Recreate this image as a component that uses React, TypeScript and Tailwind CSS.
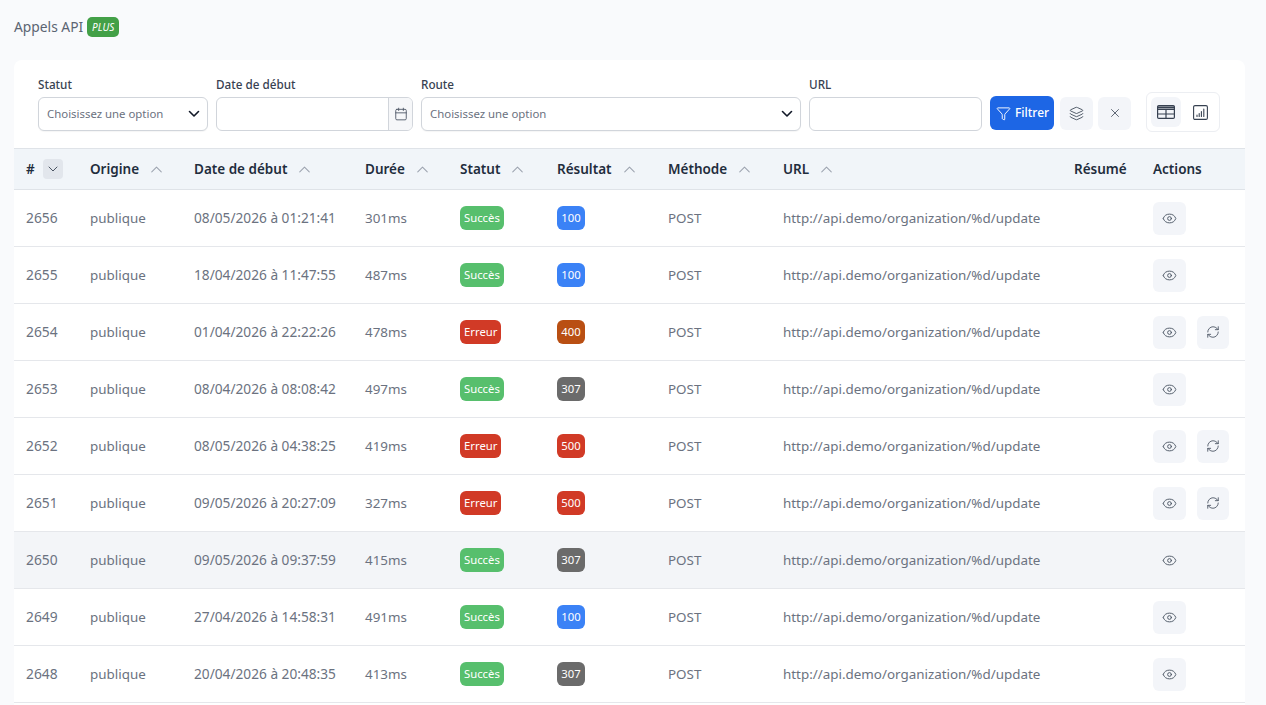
import { Calendar, ChevronDown, ChevronUp, Eye, Funnel, Layers, RefreshCw, X } from "lucide-react";

const rows = [
  { id: 2656, date: "08/05/2026 à 01:21:41", ms: "301ms", ok: true, code: 100 },
  { id: 2655, date: "18/04/2026 à 11:47:55", ms: "487ms", ok: true, code: 100 },
  { id: 2654, date: "01/04/2026 à 22:22:26", ms: "478ms", ok: false, code: 400 },
  { id: 2653, date: "08/04/2026 à 08:08:42", ms: "497ms", ok: true, code: 307 },
  { id: 2652, date: "08/05/2026 à 04:38:25", ms: "419ms", ok: false, code: 500 },
  { id: 2651, date: "09/05/2026 à 20:27:09", ms: "327ms", ok: false, code: 500 },
  { id: 2650, date: "09/05/2026 à 09:37:59", ms: "415ms", ok: true, code: 307, hover: true },
  { id: 2649, date: "27/04/2026 à 14:58:31", ms: "491ms", ok: true, code: 100 },
  { id: 2648, date: "20/04/2026 à 20:48:35", ms: "413ms", ok: true, code: 307 },
];

const codeColors: Record<number, string> = {
  100: "bg-[#3b82f6]",
  307: "bg-[#6b6b6b]",
  400: "bg-[#b94f13]",
  500: "bg-[#d13a26]",
};

function Field({ label, width, children }: { label: string; width: string; children: React.ReactNode }) {
  return (
    <div className={`flex flex-col ${width}`}>
      <label className="mb-[3px] h-[20px] text-[11.7px] leading-[20px] font-medium text-[#374151]">{label}</label>
      {children}
    </div>
  );
}

function SelectBox() {
  return (
    <div className="flex h-[34px] items-center justify-between rounded-md border border-[#d1d5db] bg-white pr-[5px] pl-[8px] shadow-[0_1px_1px_rgba(0,0,0,0.04)]">
      <span className="text-[11.4px] text-[#6b7280]">Choisissez une option</span>
      <svg width="16" height="16" viewBox="0 0 16 16" fill="none" stroke="#111827" strokeWidth="1.6" strokeLinecap="round" strokeLinejoin="round">
        <path d="M3.5 5.5l4.5 4.5 4.5-4.5" />
      </svg>
    </div>
  );
}

function IconBtn({ children, className = "" }: { children: React.ReactNode; className?: string }) {
  return (
    <button className={`flex h-[33px] items-center justify-center rounded-md text-[#4b5563] ${className}`}>
      {children}
    </button>
  );
}

function Th({ label, width, sort = true }: { label: string; width: string; sort?: boolean }) {
  return (
    <th className={`${width} px-0 pb-[2px] text-left font-semibold`}>
      <span className="inline-flex items-center gap-[8px] text-[13.5px] text-[#1f2d3d]">
        {label}
        {sort && <ChevronUp size={19} strokeWidth={1.3} className="text-[#9ca3af]" />}
      </span>
    </th>
  );
}

export default function App() {
  return (
    <div className="h-[705px] overflow-hidden bg-[#f9fafc] px-[14px] font-['Noto_Sans',sans-serif] text-[#6b7280]">
      <div className="flex h-[60px] items-start pt-[17px]">
        <span className="text-[13.8px] leading-[20px] text-[#5b6472]">Appels API</span>
        <span className="ml-[4px] flex h-[20px] w-[32px] items-center justify-center rounded-[5px] bg-[#43a047] text-[10px] text-white italic">
          PLUS
        </span>
      </div>

      <div className="w-[1231px] rounded-t-lg bg-white">
        <div className="flex h-[88px] items-start pt-[14px] pl-[24px]">
          <Field label="Statut" width="w-[170px]">
            <SelectBox />
          </Field>
          <Field label="Date de début" width="w-[197px] ml-[8px]">
            <div className="flex h-[34px] overflow-hidden rounded-md border border-[#d1d5db] bg-white">
              <div className="flex-1" />
              <div className="flex w-[24px] items-center justify-center border-l border-[#d1d5db] bg-[#f6f7f9]">
                <Calendar size={14} strokeWidth={1.5} className="text-[#4b5563]" />
              </div>
            </div>
          </Field>
          <Field label="Route" width="w-[380px] ml-[8px]">
            <SelectBox />
          </Field>
          <Field label="URL" width="w-[173px] ml-[8px]">
            <div className="h-[34px] rounded-md border border-[#d1d5db] bg-white" />
          </Field>
          <div className="mt-[18px] ml-[8px] flex items-center">
            <button className="mt-[2px] flex h-[34px] w-[64px] items-center justify-center gap-[4px] rounded-md bg-[#1d66e5] pl-[1px] text-[12px] font-medium text-white">
              <Funnel size={15} strokeWidth={1.5} />
              Filtrer
            </button>
            <IconBtn className="mt-[2px] ml-[6px] w-[33px] bg-[#f3f5f9]">
              <Layers size={15} strokeWidth={1.5} />
            </IconBtn>
            <IconBtn className="mt-[2px] ml-[5px] w-[33px] bg-[#f3f5f9]">
              <X size={14} strokeWidth={1.5} />
            </IconBtn>
            <div className="ml-[15px] flex h-[40px] w-[74px] items-center justify-center gap-[4px] rounded-md border border-[#eceef2]">
              <span className="flex h-[30px] w-[30px] items-center justify-center rounded-md bg-[#f3f5f9]">
                <svg width="18" height="14" viewBox="0 0 18 14" fill="none" stroke="#374151" strokeWidth="1.2">
                  <rect x="0.6" y="0.6" width="16.8" height="12.8" rx="1.2" />
                  <path d="M0.6 4.5h16.8M0.6 9h16.8M9 4.5v8.9" />
                  <path d="M0.6 2.5h16.8" strokeWidth="2" />
                </svg>
              </span>
              <span className="flex h-[30px] w-[30px] items-center justify-center">
                <svg width="15" height="15" viewBox="0 0 15 15" fill="none" stroke="#374151" strokeWidth="1.1">
                  <rect x="0.6" y="0.6" width="13.8" height="13.8" rx="1.4" />
                  <path d="M4 11.5v-1.5M6.2 11.5v-3M8.4 11.5v-5M10.8 11.5v-7.5" strokeLinecap="round" />
                </svg>
              </span>
            </div>
          </div>
        </div>

        <table className="w-full table-fixed border-collapse">
          <thead>
            <tr className="h-[41px] border-y border-[#dfe3e8] bg-[#f1f5f9]">
              <th className="w-[76px] pb-[2px] pl-[12px] text-left font-semibold">
                <span className="inline-flex items-center gap-[8px] text-[13.5px] text-[#1f2d3d]">
                  #
                  <span className="flex h-[20px] w-[20px] items-center justify-center rounded bg-[#e2e6ec]">
                    <ChevronDown size={16} strokeWidth={1.5} className="text-[#4b5563]" />
                  </span>
                </span>
              </th>
              <Th label="Origine" width="w-[104px]" />
              <Th label="Date de début" width="w-[171px]" />
              <Th label="Durée" width="w-[95px]" />
              <Th label="Statut" width="w-[97px]" />
              <Th label="Résultat" width="w-[111px]" />
              <Th label="Méthode" width="w-[115px]" />
              <Th label="URL" width="w-[291px]" />
              <Th label="Résumé" width="w-[79px]" sort={false} />
              <Th label="Actions" width="w-[92px]" sort={false} />
            </tr>
          </thead>
          <tbody>
            {rows.map((r) => (
              <tr key={r.id} className={`h-[57px] border-b border-[#e5e7eb] text-[13.4px] ${r.hover ? "bg-[#f3f5f8]" : ""}`}>
                <td className="pl-[12px] text-[13.8px]">{r.id}</td>
                <td>publique</td>
                <td className="text-[13.7px]">{r.date}</td>
                <td>{r.ms}</td>
                <td>
                  <span
                    className={`inline-flex h-[24px] items-center rounded-md px-[4px] text-[11.3px] text-white ${
                      r.ok ? "bg-[#57bf6d]" : "bg-[#d13a26]"
                    }`}
                  >
                    {r.ok ? "Succès" : "Erreur"}
                  </span>
                </td>
                <td>
                  <span
                    className={`inline-flex h-[24px] w-[28px] items-center justify-center rounded-md text-[11.3px] text-white ${codeColors[r.code]}`}
                  >
                    {r.code}
                  </span>
                </td>
                <td>POST</td>
                <td className="whitespace-nowrap">http://api.demo/organization/%d/update</td>
                <td />
                <td>
                  <div className="flex gap-[11px]">
                    <IconBtn className={`w-[33px] ${r.hover ? "" : "bg-[#f3f5f9]"}`}>
                      <Eye size={15} strokeWidth={1.5} />
                    </IconBtn>
                    {!r.ok && (
                      <IconBtn className="w-[32px] bg-[#f3f5f9]">
                        <RefreshCw size={14} strokeWidth={1.5} />
                      </IconBtn>
                    )}
                  </div>
                </td>
              </tr>
            ))}
          </tbody>
        </table>
        <div className="h-[40px]" />
      </div>
    </div>
  );
}
